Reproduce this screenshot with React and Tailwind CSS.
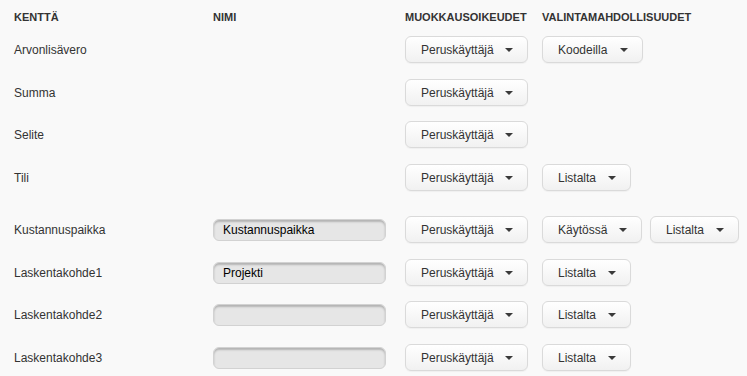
const ROWS = [
  { field: 'Arvonlisävero', h: 'h-[43px]', rights: 'Peruskäyttäjä', options: [{ label: 'Koodeilla', w: 'w-[101px]' }] },
  { field: 'Summa', h: 'h-[42px]', rights: 'Peruskäyttäjä', options: [] },
  { field: 'Selite', h: 'h-[43px]', rights: 'Peruskäyttäjä', options: [] },
  { field: 'Tili', h: 'h-[52px]', rights: 'Peruskäyttäjä', options: [{ label: 'Listalta', w: 'w-[89px]' }] },
  {
    field: 'Kustannuspaikka',
    h: 'h-[43px]',
    name: 'Kustannuspaikka',
    rights: 'Peruskäyttäjä',
    options: [
      { label: 'Käytössä', w: 'w-[100px]' },
      { label: 'Listalta', w: 'w-[89px]' },
    ],
  },
  { field: 'Laskentakohde1', h: 'h-[42px]', name: 'Projekti', rights: 'Peruskäyttäjä', options: [{ label: 'Listalta', w: 'w-[89px]' }] },
  { field: 'Laskentakohde2', h: 'h-[43px]', name: '', rights: 'Peruskäyttäjä', options: [{ label: 'Listalta', w: 'w-[89px]' }] },
  { field: 'Laskentakohde3', h: 'h-[43px]', name: '', rights: 'Peruskäyttäjä', options: [{ label: 'Listalta', w: 'w-[89px]' }] },
]

function Caret() {
  return <span className="w-0 h-0 border-x-4 border-x-transparent border-t-4 border-t-[#3a3a3a] shrink-0" />
}

function DropButton({ label, w }) {
  return (
    <div
      className={`${w} h-[27px] flex items-center justify-between pl-[15px] pr-[14px] rounded-[6px] border border-[#dadada] bg-gradient-to-b from-white to-[#f1f1f1] shadow-[0_1px_1px_rgba(0,0,0,0.04)] text-[12px] text-[#333]`}
    >
      <span>{label}</span>
      <Caret />
    </div>
  )
}

function NameInput({ value }) {
  return (
    <div className="w-[173px] h-[22px] flex items-center pl-[9px] rounded-[6px] border border-[#d2d2d2] bg-[#e6e6e6] shadow-[inset_0_2px_2px_rgba(0,0,0,0.22)] text-[12px] text-black">
      {value}
    </div>
  )
}

export default function App() {
  return (
    <div className="w-[747px] h-[376px] overflow-hidden bg-[#f9f9f9] pl-[14px] font-['Liberation_Sans',Arial,sans-serif]">
      {/* otsikkorivi */}
      <div className="h-[28px] pt-[10px] flex text-[11px] font-bold text-[#333] leading-[14px]">
        <div className="w-[199px]">KENTTÄ</div>
        <div className="w-[192px]">NIMI</div>
        <div className="w-[137px]">MUOKKAUSOIKEUDET</div>
        <div>VALINTAMAHDOLLISUUDET</div>
      </div>

      {ROWS.map((row) => (
        <div key={row.field} className={`${row.h} pt-[8px] flex items-start`}>
          <div className="w-[199px] h-[27px] flex items-center text-[12px] text-[#333]">{row.field}</div>
          <div className="w-[192px] h-[27px] flex items-center">
            {row.name !== undefined && <NameInput value={row.name} />}
          </div>
          <div className="w-[137px]">
            <DropButton label={row.rights} w="w-[123px]" />
          </div>
          <div className="flex gap-[8px]">
            {row.options.map((o) => (
              <DropButton key={o.label} label={o.label} w={o.w} />
            ))}
          </div>
        </div>
      ))}
    </div>
  )
}
